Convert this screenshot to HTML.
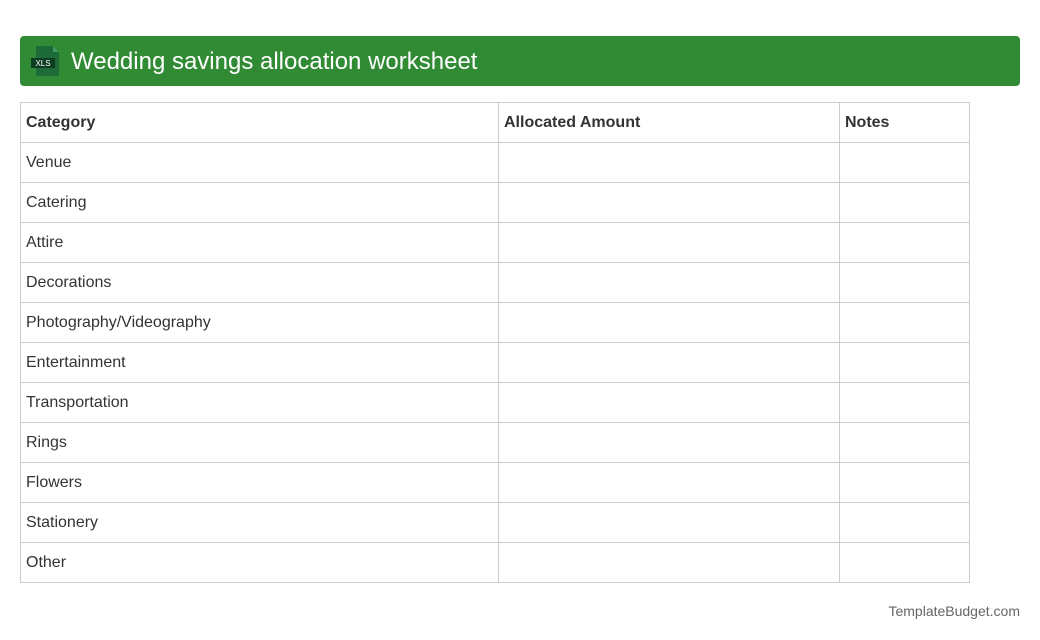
<!DOCTYPE html>
<html><head><style>
body{margin:0;width:1040px;height:640px;background:#fff;font-family:"Liberation Sans",Roboto,sans-serif;position:relative}
.hdr{position:absolute;left:20px;top:36px;width:1000px;height:50px;background:#318a34;border-radius:4px}
.hdr h1{position:absolute;left:51px;top:1px;margin:0;line-height:50px;font-size:24px;font-weight:normal;color:#fff}
table{position:absolute;left:20px;top:102px;border-collapse:collapse;width:950px}
td{border:1px solid #ccc;height:39px;padding:0 0 0 5px;font-size:16px;color:#333}
th{border:1px solid #ccc;height:39px;padding:0 0 0 5px;font-size:16px;color:#333;text-align:left}
.ft{position:absolute;right:20px;top:603px;font-size:14px;color:#666}
</style></head><body>
<div class="hdr">
<svg style="position:absolute;left:11px;top:10px" width="30" height="30" viewBox="0 0 30 30">
<path d="M5 0H22L28 6V30H5Z" fill="#1e6b3a"/><path d="M22 0V6H28Z" fill="#3f9a5e"/>
<rect x="0" y="12" width="24" height="10" fill="#0d3d20"/>
<text x="12" y="20" font-size="8" fill="#fff" text-anchor="middle" font-family="Liberation Sans">XLS</text></svg>
<h1>Wedding savings allocation worksheet</h1></div>
<table>
<tr><th style="width:472px">Category</th><th style="width:335px">Allocated Amount</th><th>Notes</th></tr>
<tr><td>Venue</td><td></td><td></td></tr>
<tr><td>Catering</td><td></td><td></td></tr>
<tr><td>Attire</td><td></td><td></td></tr>
<tr><td>Decorations</td><td></td><td></td></tr>
<tr><td>Photography/Videography</td><td></td><td></td></tr>
<tr><td>Entertainment</td><td></td><td></td></tr>
<tr><td>Transportation</td><td></td><td></td></tr>
<tr><td>Rings</td><td></td><td></td></tr>
<tr><td>Flowers</td><td></td><td></td></tr>
<tr><td>Stationery</td><td></td><td></td></tr>
<tr><td>Other</td><td></td><td></td></tr>
</table>
<div class="ft">TemplateBudget.com</div>
</body></html>
